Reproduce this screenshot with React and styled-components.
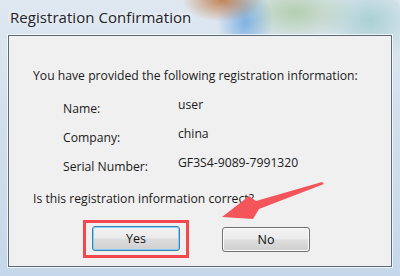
import React from "react";
import styled, { createGlobalStyle } from "styled-components";

const Global = createGlobalStyle`
  html, body { margin: 0; padding: 0; background: #d9e4ee; }
  body { width: 400px; height: 276px; overflow: hidden; }
`;

const Window = styled.div`
  position: relative;
  width: 400px;
  height: 276px;
  box-sizing: border-box;
  display: flex;
  flex-direction: column;
  padding: 0 8px 9px 8px;
  border-top-right-radius: 8px;
  background:
    radial-gradient(ellipse 40px 22px at 222px 0px, rgba(190,115,60,0.85), rgba(190,115,60,0) 100%),
    radial-gradient(ellipse 28px 40px at 245px 22px, rgba(80,150,220,0.65), rgba(80,150,220,0) 100%),
    radial-gradient(ellipse 60px 30px at 295px 12px, rgba(150,190,130,0.6), rgba(150,190,130,0) 100%),
    radial-gradient(ellipse 50px 40px at 370px 20px, rgba(130,190,185,0.55), rgba(130,190,185,0) 100%),
    linear-gradient(180deg, #dfe8f1 0%, #d3e0ec 40%, #c5d8ea 100%);
  font-family: "Open Sans", "Noto Sans", sans-serif;
`;

const TitleBar = styled.div`
  height: 35px;
  display: flex;
  align-items: center;
  padding-left: 2px;
  padding-bottom: 1px;
  box-sizing: border-box;
  font-size: 15px;
  color: #1f2328;
  letter-spacing: 0.05px;
  text-shadow: 0 0 6px rgba(255,255,255,0.9);
`;

const Client = styled.div`
  flex: 1;
  background: #f0f0f0;
  border: 1px solid #5b6b78;
  box-shadow: 0 0 0 1px rgba(255,255,255,0.7);
  padding: 31px 24px 0 24px;
  color: #1b1b1b;
  font-size: 12.2px;
  display: flex;
  flex-direction: column;
`;

const Message = styled.div`
  line-height: 17px;
`;

const InfoGrid = styled.div`
  display: grid;
  grid-template-columns: 115px 1fr;
  row-gap: 8px;
  margin: 12px 0 0 30px;
`;

const Label = styled.div`
  line-height: 17px;
  padding-top: 4px;
`;

const Value = styled.div`
  line-height: 17px;
`;

const Question = styled.div`
  line-height: 17px;
  margin-top: 15px;
`;

const ButtonRow = styled.div`
  display: flex;
  align-items: center;
  margin-top: 13px;
  margin-left: 50px;
  gap: 33px;
`;

const Highlight = styled.div`
  border: 3px solid #f2474f;
  padding: 3px 6px 4px 6px;
  display: flex;
`;

const Button = styled.div`
  width: 88px;
  height: 25px;
  box-sizing: border-box;
  border-radius: 3px;
  border: 1px solid ${(p) => (p.$default ? "#3c7fb1" : "#707070")};
  box-shadow: ${(p) =>
    p.$default ? "inset 0 0 0 1px #7fd0f6" : "inset 0 0 0 1px #fbfbfb"};
  background: linear-gradient(180deg, #f2f2f2 0%, #ebebeb 48%, #dddddd 52%, #cfcfcf 100%);
  display: flex;
  align-items: center;
  justify-content: center;
  font-size: 12.5px;
  color: #111;
`;

const Arrow = styled.svg`
  position: absolute;
  left: 0;
  top: 0;
  pointer-events: none;
`;

export default function App() {
  return (
    <>
      <Global />
      <Window>
        <TitleBar>Registration Confirmation</TitleBar>
        <Client>
          <Message>You have provided the following registration information:</Message>
          <InfoGrid>
            <Label>Name:</Label>
            <Value>user</Value>
            <Label>Company:</Label>
            <Value>china</Value>
            <Label>Serial Number:</Label>
            <Value>GF3S4-9089-7991320</Value>
          </InfoGrid>
          <Question>Is this registration information correct?</Question>
          <ButtonRow>
            <Highlight>
              <Button $default>Yes</Button>
            </Highlight>
            <Button>No</Button>
          </ButtonRow>
        </Client>
        <Arrow width="400" height="276" viewBox="0 0 400 276">
          <polygon
            points="322,182 324,184 259,209 253,219 222,217 249,196 256,201"
            fill="#f4555a"
          />
        </Arrow>
      </Window>
    </>
  );
}
